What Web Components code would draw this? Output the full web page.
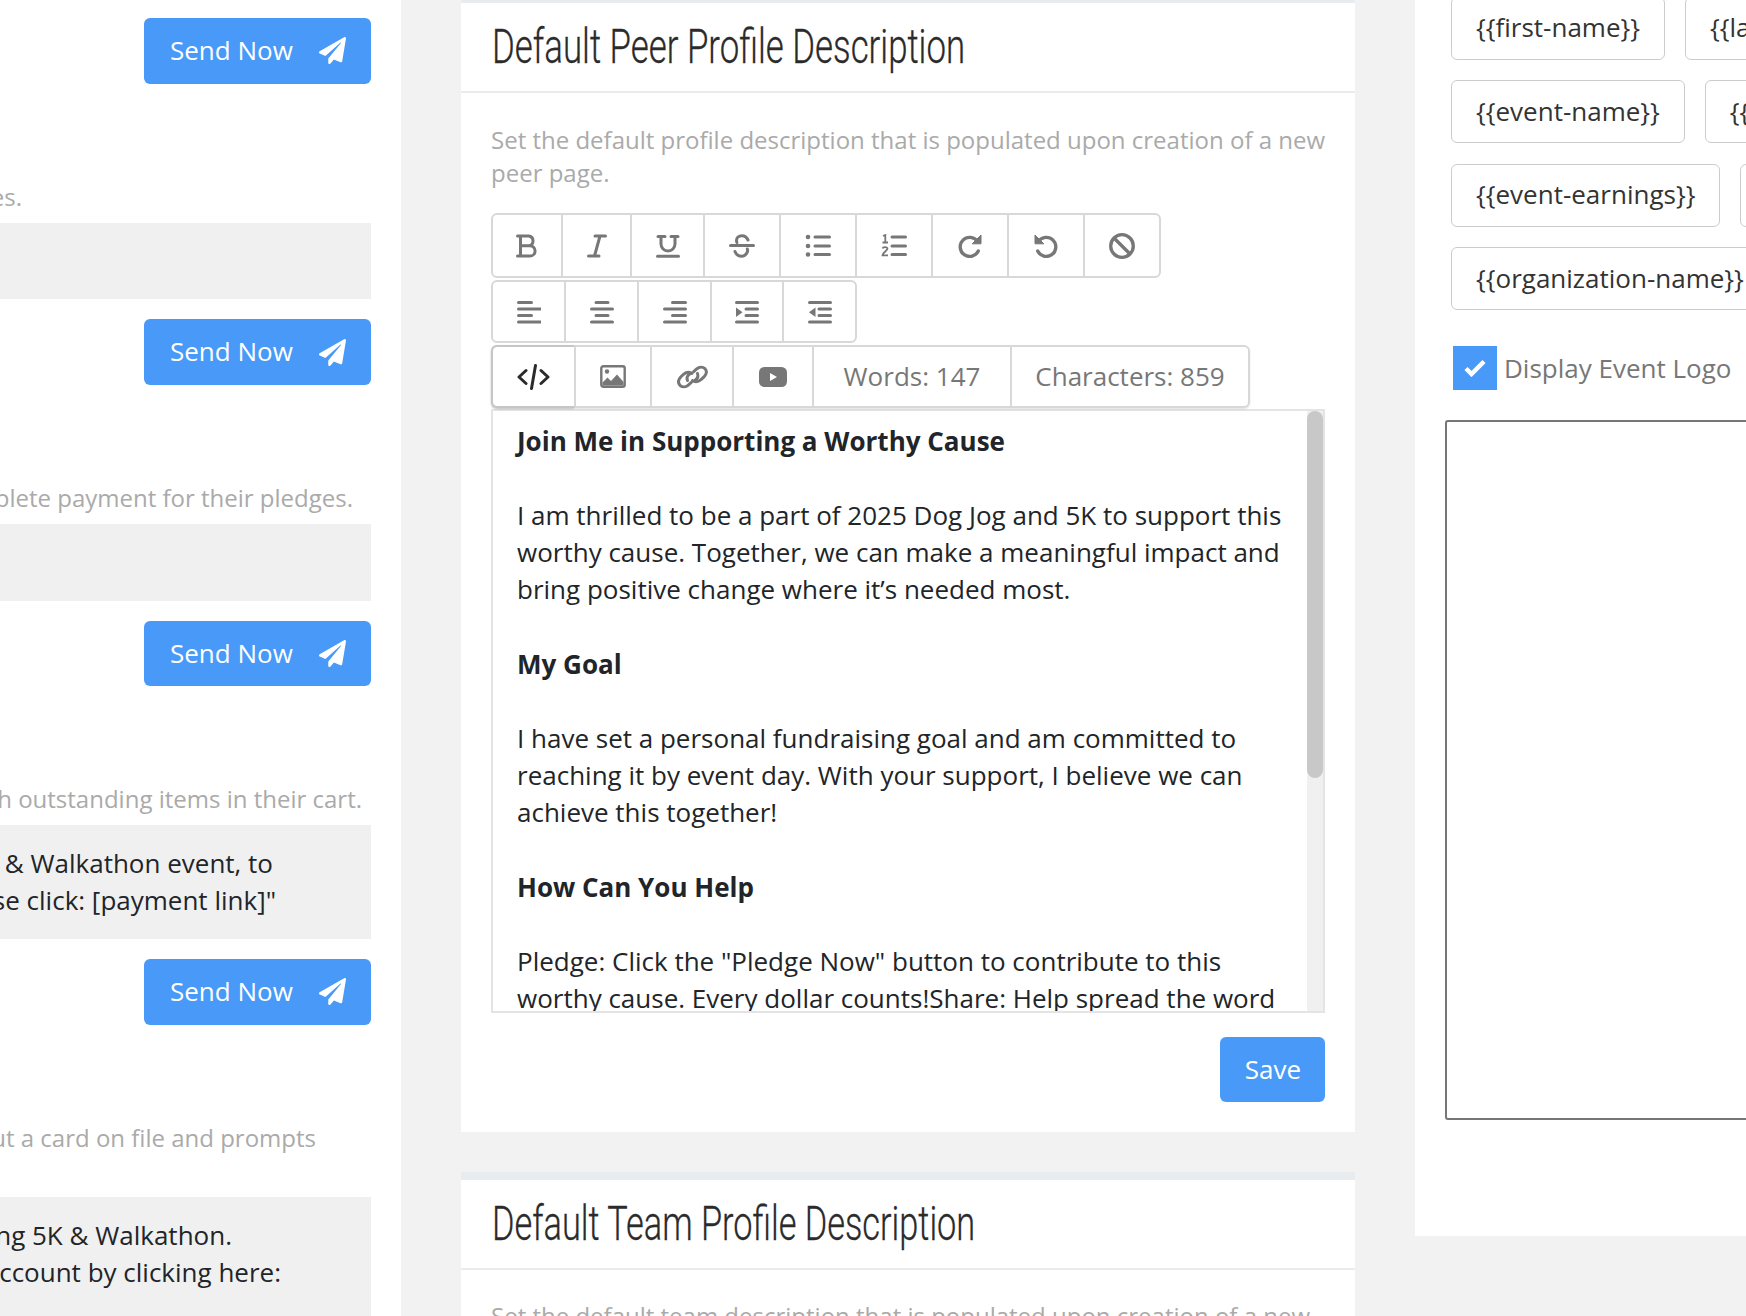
<!DOCTYPE html>
<html lang="en">
<head>
<meta charset="utf-8">
<title>Profile settings</title>
<style>
  html, body { margin: 0; height: 1316px; overflow: hidden; background: #f2f2f2; }
  body { font: 400 26px/37.15px "Open Sans", sans-serif; color: #212529; }
</style>
</head>
<body>
<page-layout>
  <div slot="left">
    <send-button style="margin-top:18px"></send-button>

    <reminder-block>
      <clip-line slot="desc" end="22">Keep participants informed about upcoming deadlines and updates.</clip-line>
    </reminder-block>

    <reminder-block>
      <clip-line slot="desc" end="353">Reminds supporters to complete payment for their pledges.</clip-line>
    </reminder-block>

    <reminder-block>
      <clip-line slot="desc" end="362">Reminds registrants who left the event with outstanding items in their cart.</clip-line>
      <clip-line slot="msg" end="273">"Thank you for registering for the Running 5K &amp; Walkathon event, to</clip-line>
      <clip-line slot="msg" end="276">complete your registration payment please click: [payment link]"</clip-line>
    </reminder-block>

    <reminder-block nobutton>
      <clip-line slot="desc" end="316">Sent to registrants who are checked in without a card on file and prompts</clip-line>
      <clip-line slot="desc" end="316">&nbsp;</clip-line>
      <clip-line slot="msg" end="232">"Thank you for participating in the Running 5K &amp; Walkathon.</clip-line>
      <clip-line slot="msg" end="281">Please remember to add a card to your account by clicking here:</clip-line>
      <clip-line slot="msg" end="281">&nbsp;</clip-line>
    </reminder-block>
  </div>

  <div slot="center">
    <profile-card heading="Default Peer Profile Description" squeeze=".71">
      <span slot="desc">Set the default profile description that is populated upon creation of a new peer page.</span>
      <rich-editor>
        <div><b>Join Me in Supporting a Worthy Cause</b></div>
        <br>
        <div>I am thrilled to be a part of 2025 Dog Jog and 5K to support this worthy cause. Together, we can make a meaningful impact and bring positive change where it’s needed most.</div>
        <br>
        <div><b>My Goal</b></div>
        <br>
        <div>I have set a personal fundraising goal and am committed to reaching it by event day. With your support, I believe we can achieve this together!</div>
        <br>
        <div><b>How Can You Help</b></div>
        <br>
        <div>Pledge: Click the "Pledge Now" button to contribute to this worthy cause. Every dollar counts!Share: Help spread the word</div>
      </rich-editor>
    </profile-card>
    <profile-card heading="Default Team Profile Description" squeeze=".7" style="margin-top:40px">
      <span slot="desc">Set the default team description that is populated upon creation of a new team page.</span>
    </profile-card>
  </div>

  <div slot="right">
    <tag-cloud>
      <tag-row><merge-tag>{{first-name}}</merge-tag><merge-tag>{{last-name}}</merge-tag></tag-row>
      <tag-row><merge-tag>{{event-name}}</merge-tag><merge-tag>{{event-date}}</merge-tag></tag-row>
      <tag-row><merge-tag>{{event-earnings}}</merge-tag><merge-tag>{{event-goal}}</merge-tag></tag-row>
      <tag-row><merge-tag>{{organization-name}}</merge-tag></tag-row>
    </tag-cloud>
    <check-field>Display Event Logo</check-field>
    <logo-box></logo-box>
  </div>
</page-layout>

<script>
const ICONS = {
  bold:   [22,24,'<path d="M1.500 2H13a5 5 0 0 1 0 9.800H4.500M4.500 11.800H14a5.100 5.100 0 0 1 0 10.200H1.500M4.500 2v20" fill="none" stroke="#777" stroke-width="3" stroke-linecap="round" stroke-linejoin="round"/>'],
  italic: [20,24,'<path d="M8 2h10.500M13 2 7.500 22M1.500 22H12" fill="none" stroke="#777" stroke-width="3" stroke-linecap="round"/>'],
  under:  [24,24,'<path d="M2 2.500h7M15 2.500h7M5 2.500v7.500a7 7 0 0 0 14 0V2.500" fill="none" stroke="#777" stroke-width="3" stroke-linecap="round"/><path d="M1.500 22.300h21" stroke="#777" stroke-width="3" stroke-linecap="round"/>'],
  strike: [26,24,'<path d="M1.500 11.500h23" stroke="#777" stroke-width="3" stroke-linecap="round"/><path d="M19 6C17.500 3 15 1.800 13 1.800 9.500 1.800 7.500 4 7.500 6.500c0 .7.100 1.300.4 2M18.300 15c.3 .8.400 1.700.2 2.500-1 3-3.500 4.700-6 4.700-3 0-5.500-2-6.500-4.700" fill="none" stroke="#777" stroke-width="3" stroke-linecap="round"/>'],
  ul:     [26,24,'<circle cx="3" cy="3" r="2.300" fill="#777"/><circle cx="3" cy="12" r="2.300" fill="#777"/><circle cx="3" cy="20.500" r="2.300" fill="#777"/><path d="M10 3h14.500M10 12h14.500M10 20.500h14.500" stroke="#777" stroke-width="3" stroke-linecap="round"/>'],
  ol:     [26,24,'<path d="M2 2l2.300-1v7M1.500 8.500h5.500" fill="none" stroke="#777" stroke-width="1.800"/><path d="M1.500 14.500c.5-2 4.800-2 5 .3.100 1.700-4.800 3.500-5 6.500h5.500" fill="none" stroke="#777" stroke-width="1.800"/><path d="M11 3h13.500M11 12h13.500M11 20.500h13.500" stroke="#777" stroke-width="3" stroke-linecap="round"/>'],
  redo:   [24,24,'<path d="M19.500 7.500A9.500 9.500 0 1 0 20.300 17" fill="none" stroke="#777" stroke-width="3.300" stroke-linecap="round"/><path d="M23 1v8.800h-8.800z" fill="#777" stroke="#777" stroke-linejoin="round"/>'],
  undo:   [24,24,'<g transform="matrix(-1 0 0 1 24 0)"><path d="M19.500 7.500A9.500 9.500 0 1 0 20.300 17" fill="none" stroke="#777" stroke-width="3.300" stroke-linecap="round"/><path d="M23 1v8.800h-8.800z" fill="#777" stroke="#777" stroke-linejoin="round"/></g>'],
  ban:    [26,26,'<circle cx="13" cy="13" r="11.300" fill="none" stroke="#777" stroke-width="3.300"/><path d="M5 5l16 16" stroke="#777" stroke-width="3.300"/>'],
  left:   [24,24,'<path d="M1.500 2.500h13M1.500 9h22M1.500 15.500h13M1.500 22h22" stroke="#777" stroke-width="3" stroke-linecap="round"/>'],
  center: [24,24,'<path d="M6 2.500h12M1.500 9h21M6 15.500h12M1.500 22h21" stroke="#777" stroke-width="3" stroke-linecap="round"/>'],
  right:  [24,24,'<path d="M9.500 2.500h13M1.500 9h21M9.500 15.500h13M1.500 22h21" stroke="#777" stroke-width="3" stroke-linecap="round"/>'],
  indent: [24,24,'<path d="M1.500 2.500h21M11 9h11.500M11 15.500h11.500M1.500 22h21" stroke="#777" stroke-width="3" stroke-linecap="round"/><path d="M1 7.500l6.500 4.700L1 17z" fill="#777"/>'],
  outdent:[24,24,'<path d="M1.500 2.500h21M11 9h11.500M11 15.500h11.500M1.500 22h21" stroke="#777" stroke-width="3" stroke-linecap="round"/><path d="M7.500 7.500L1 12.200 7.500 17z" fill="#777"/>'],
  code:   [33,26,'<path d="M9 6.500L2 13l7 6.500M24 6.500l7 6.500-7 6.500M18.500 1.500L14.500 24.500" fill="none" stroke="#2b2b2b" stroke-width="3" stroke-linecap="round" stroke-linejoin="round"/>'],
  image:  [26,23,'<rect x="1.300" y="1.300" width="23.400" height="20.400" rx="2" fill="none" stroke="#777" stroke-width="2.400"/><circle cx="7" cy="6.500" r="2.200" fill="#777"/><path d="M2.500 20.500v-3l5-5 3.500 3.500 6-6.500 6.500 7.500v3.500z" fill="#777"/>'],
  link:   [31,24,'<g fill="none" stroke="#777" stroke-width="3" stroke-linecap="round"><path d="M15 8.500l-1-.7c-2.400-1-5.400-.3-7.500 1.500l-2.500 2.500C1 14.800 1 18 3 20.300c2.200 2 5.800 2 8.300-.2l3-2.700"/><path d="M15.500 15.500l1 .7c2.400 1 5.400.3 7.500-1.500l3-2.900C30 9 30 5.700 28 3.700c-2.200-2-5.800-2-8.300.2l-3 2.700"/><path d="M10.500 15.500c-1-2.500 0-5 2.200-6.500M20.500 8.500c1 2.500 0 5-2.200 6.500"/></g>'],
  video:  [28,20,'<rect width="28" height="20" rx="5.500" fill="#777"/><path d="M11 6l7 4-7 4z" fill="#fff"/>']
};

function shadow(host, html) {
  const r = host.attachShadow({ mode: 'open' });
  r.innerHTML = html;
  return r;
}

class UiIcon extends HTMLElement {
  connectedCallback() {
    if (this.shadowRoot) return;
    const n = this.getAttribute('name');
    if (n === 'plane') {
      shadow(this, `<style>:host{display:inline-flex}</style><svg width="27" height="27" viewBox="0 0 512 512"><path fill="#fff" d="M476 3.200L12.500 270.600c-18.100 10.400-15.800 35.600 2.200 43.200L121 358.400l287.300-253.200c5.500-4.900 13.300 2.600 8.600 8.300L176 407v80.500c0 23.600 28.500 32.900 42.500 15.800L282 426l124.600 52.200c14.200 6 30.400-2.900 33-18.200l72-432C515 7.800 493.300-6.800 476 3.200z"/></svg>`);
      return;
    }
    const [w, h, body] = ICONS[n];
    shadow(this, `<style>:host{display:inline-flex}</style><svg width="${w}" height="${h}" viewBox="0 0 ${w} ${h}">${body}</svg>`);
  }
}
customElements.define('ui-icon', UiIcon);

class PageLayout extends HTMLElement {
  constructor() {
    super();
    shadow(this, `<style>
      :host { display: flex; width: 1746px; height: 1316px; overflow: hidden; gap: 60px; align-items: flex-start; }
      .left { flex: none; width: 401px; height: 1316px; background: #fff; overflow: hidden; box-sizing: border-box; padding-right: 30px; }
      .center { flex: none; width: 894px; margin-top: -5px; }
      .right { flex: none; width: 500px; height: 1236px; background: #fff; overflow: hidden; box-sizing: border-box; padding-left: 30px; }
    </style>
    <div class="left"><slot name="left"></slot></div>
    <div class="center"><slot name="center"></slot></div>
    <div class="right"><slot name="right"></slot></div>`);
  }
}
customElements.define('page-layout', PageLayout);

class ClipLine extends HTMLElement {
  constructor() {
    super();
    shadow(this, `<style>:host { display: flex; justify-content: flex-end; white-space: nowrap; } span { flex: none; }</style><span><slot></slot></span>`);
  }
  connectedCallback() {
    this.style.paddingRight = (371 - parseFloat(this.getAttribute('end'))) + 'px';
  }
}
customElements.define('clip-line', ClipLine);

class SendButton extends HTMLElement {
  constructor() {
    super();
    shadow(this, `<style>
      :host { display: flex; justify-content: flex-end; }
      a { display: flex; align-items: center; justify-content: space-between; box-sizing: border-box; width: 227px; height: 65.600px; padding: 0 25px 0 26px; background: #4899f8; color: #fff; border-radius: 6px; }
    </style><a>Send Now<ui-icon name="plane"></ui-icon></a>`);
  }
}
customElements.define('send-button', SendButton);

class ReminderBlock extends HTMLElement {
  constructor() {
    super();
    shadow(this, `<style>
      :host { display: block; padding-top: 96.700px; }
      .desc { color: #aaa; font-size: 24px; line-height: 33.300px; margin: -.7px 0 9.850px; }
      .msg { background: #f0f0f0; padding: 19.700px 0; min-height: 37.150px; line-height: 37.150px; }
      send-button { margin-top: 20px; }
    </style>
    <div class="desc"><slot name="desc"></slot></div>
    <div class="msg"><slot name="msg"></slot></div>
    ${this.hasAttribute('nobutton') ? '' : '<send-button></send-button>'}`);
  }
}
customElements.define('reminder-block', ReminderBlock);

class ProfileCard extends HTMLElement {
  constructor() {
    super();
    const heading = this.getAttribute('heading');
    const squeeze = this.getAttribute('squeeze');
    shadow(this, `<style>
      :host { display: block; background: #fff; border-top: 8px solid #e9ecef; }
      header { height: 88px; border-bottom: 2px solid #e9ecef; padding-left: 31px; display: flex; align-items: center; overflow: hidden; }
      h2 { margin: 0; font: 300 49px/60px Roboto, sans-serif; color: #2b2b2b; white-space: nowrap; transform: scaleX(${squeeze}); transform-origin: 0 50%; -webkit-text-stroke: .3px #2b2b2b; }
      .body { padding: 29.600px 30px 29.700px; }
      .desc { color: #aaa; font-size: 24px; line-height: 33.400px; margin: 0 -8px 23.600px 0; }
      .foot { display: flex; justify-content: flex-end; margin-top: 24px; }
      .save { display: flex; align-items: center; justify-content: center; box-sizing: border-box; padding-left: 1px; width: 105px; height: 65px; background: #4899f8; color: #fff; border-radius: 6px; }
    </style>
    <header><h2>${heading}</h2></header>
    <div class="body">
      <div class="desc"><slot name="desc"></slot></div>
      <slot></slot>
      <div class="foot"><a class="save">Save</a></div>
    </div>`);
  }
}
customElements.define('profile-card', ProfileCard);

class ToolBtn extends HTMLElement {
  constructor() {
    super();
    shadow(this, `<style>
      :host { display: flex; align-items: center; justify-content: center; box-sizing: border-box; color: #777; border-left: 2px solid #d8d8d8; }
      :host(:first-child) { border-left: 0; }
      :host([active]) { border: 2px solid #c6c6c6; border-right: 0; border-radius: 6px 0 0 6px; margin: -2px 0 -2px -2px; box-shadow: 0 1px 2px rgba(0,0,0,.15); }
    </style><slot></slot>`);
  }
  connectedCallback() {
    this.style.width = this.getAttribute('w') + 'px';
    const icon = this.getAttribute('icon');
    if (icon && !this.children.length) this.innerHTML = `<ui-icon name="${icon}"></ui-icon>`;
  }
}
customElements.define('tool-btn', ToolBtn);

class ToolRow extends HTMLElement {
  constructor() {
    super();
    shadow(this, `<style>
      :host { display: flex; width: max-content; box-sizing: border-box; border: 2px solid #d8d8d8; border-radius: 6px; }
    </style><slot></slot>`);
  }
  connectedCallback() { this.style.height = this.getAttribute('h') + 'px'; }
}
customElements.define('tool-row', ToolRow);

class RichEditor extends HTMLElement {
  constructor() {
    super();
    const rows = [
      [65, [68,69,73,76,76,76,76,76].map((w,i)=>[w,['bold','italic','under','strike','ul','ol','redo','undo'][i]]).concat([[76,'ban']])],
      [63, [[71,'left'],[73,'center'],[73,'right'],[72,'indent'],[73,'outdent']]],
    ];
    const rowHtml = rows.map(([h,btns]) => `<tool-row h="${h}">${btns.map(([w,ic])=>`<tool-btn w="${w}" icon="${ic}"></tool-btn>`).join('')}</tool-row>`).join('');
    shadow(this, `<style>
      :host { display: block; }
      .tools { display: flex; flex-direction: column; gap: 2px; margin-bottom: 1px; }
      .box { display: flex; height: 604px; box-sizing: border-box; border: 2px solid #e4e4e4; overflow: hidden; }
      .content { flex: none; box-sizing: border-box; width: 813px; padding: 11.700px 20px 0 24px; overflow: hidden; }
      .track { flex: none; width: 16px; margin-left: auto; background: #f0f0f0; }
      .thumb { height: 367px; background: #c8c8c8; border-radius: 8px; }
      .shadowed { box-shadow: 0 1px 2px rgba(0,0,0,.12); }
    </style>
    <div class="tools">
      ${rowHtml}
      <tool-row h="63" class="shadowed">
        <tool-btn w="83" icon="code" active></tool-btn>
        <tool-btn w="76" icon="image"></tool-btn>
        <tool-btn w="82" icon="link"></tool-btn>
        <tool-btn w="80" icon="video"></tool-btn>
        <tool-btn w="198">Words: 147</tool-btn>
        <tool-btn w="238">Characters: 859</tool-btn>
      </tool-row>
    </div>
    <div class="box">
      <div class="content"><slot></slot></div>
      <div class="track"><div class="thumb"></div></div>
    </div>`);
  }
}
customElements.define('rich-editor', RichEditor);

class TagCloud extends HTMLElement {
  constructor() {
    super();
    shadow(this, `<style>
      :host { display: flex; flex-direction: column; gap: 20.500px; margin: -3.500px 0 0 6px; }
    </style><slot></slot>`);
  }
}
customElements.define('tag-cloud', TagCloud);

class TagRow extends HTMLElement {
  constructor() {
    super();
    shadow(this, `<style>:host { display: flex; gap: 20px; }</style><slot></slot>`);
  }
}
customElements.define('tag-row', TagRow);

class MergeTag extends HTMLElement {
  constructor() {
    super();
    shadow(this, `<style>
      :host { display: flex; align-items: center; flex: none; box-sizing: border-box; height: 63px; padding: 0 24px; border: 1.500px solid #ccc; border-radius: 6px; color: #333; white-space: nowrap; }
    </style><slot></slot>`);
  }
}
customElements.define('merge-tag', MergeTag);

class CheckField extends HTMLElement {
  constructor() {
    super();
    shadow(this, `<style>
      :host { display: flex; align-items: center; gap: 7px; margin: 36px 0 0 8px; color: #777; white-space: nowrap; }
      .box { flex: none; width: 44px; height: 44px; background: #4899f8; display: flex; align-items: center; justify-content: center; }
      .label { margin-top: 2px; }
    </style>
    <span class="box"><svg width="22" height="18" viewBox="0 0 22 18"><path d="M2 9.500l5.500 5.500L20 2.500" fill="none" stroke="#fff" stroke-width="4.500"/></svg></span>
    <span class="label"><slot></slot></span>`);
  }
}
customElements.define('check-field', CheckField);

class LogoBox extends HTMLElement {
  constructor() {
    super();
    shadow(this, `<style>
      :host { display: block; box-sizing: border-box; height: 699.500px; width: 420px; margin-top: 30px; border: 2px solid #767676; border-radius: 3px; background: #fff; }
    </style>`);
  }
}
customElements.define('logo-box', LogoBox);
</script>
</body>
</html>
